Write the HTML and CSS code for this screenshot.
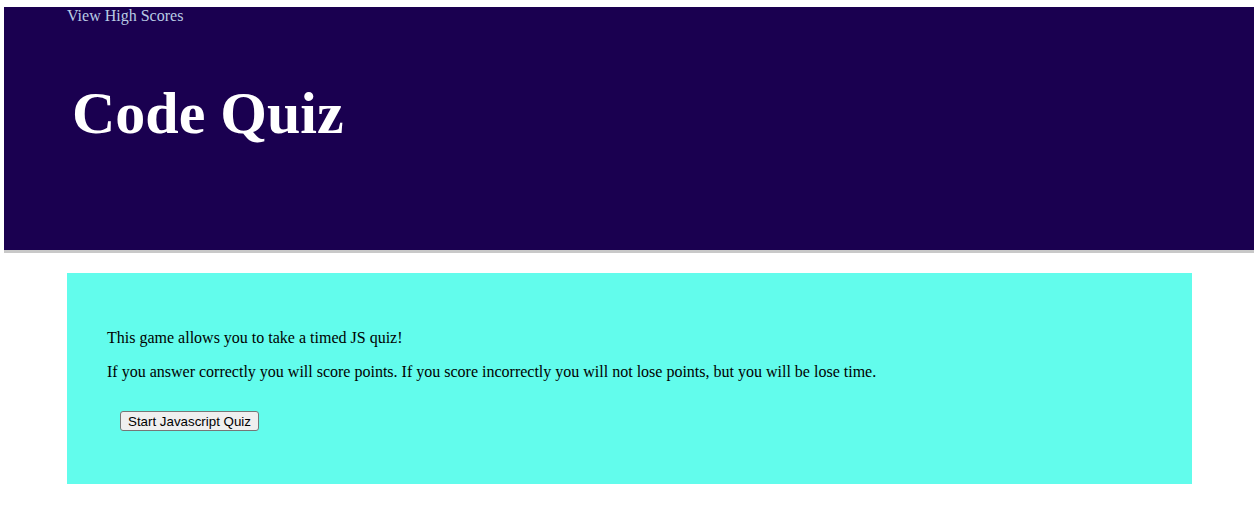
FILE: index.html
```html
<!DOCTYPE html>
<html>
<head>
<meta charset="utf-8">
<title>Code Quiz</title>
<link rel="stylesheet" href="styles.css">
</head>
<body>
<header class="top">
  <a class="scores-link" href="#">View High Scores</a>
  <h1 class="title">Code Quiz</h1>
</header>
<main class="intro">
  <p class="intro-text">This game allows you to take a timed JS quiz!</p>
  <p class="intro-text">If you answer correctly you will score points. If you score incorrectly you will not lose points, but you will be lose time.</p>
  <div class="actions">
    <button class="start-btn" type="button">Start Javascript Quiz</button>
  </div>
</main>
</body>
</html>
```
FILE: styles.css
```css
html, body {
  margin: 0;
  padding: 0;
  background: #ffffff;
}

body {
  font-family: "Liberation Serif", "Times New Roman", serif;
  font-size: 16px;
  color: #000;
}

.top {
  margin: 7px 4px 0;
  height: 243px;
  background: #1a0050;
  border-bottom: 3px solid #c8c8c8;
  padding: 0 0 0 63px;
  box-sizing: content-box;
}

.scores-link {
  display: block;
  color: #b8cbe4;
  text-decoration: none;
  font-size: 16px;
  line-height: 18px;
}

.title {
  margin: 54px 0 0 5px;
  font-size: 60px;
  font-weight: bold;
  color: #ffffff;
  line-height: 69px;
}

.intro {
  margin: 20px 66px 0 67px;
  background: #62fcec;
  padding: 40px 40px 53px;
}

.intro-text {
  margin: 16px 0;
  line-height: 18px;
}

.actions {
  margin: 30px 0 0 13px;
  display: flex;
}

.start-btn {
  font-family: "Liberation Sans", Arial, sans-serif;
  font-size: 13.333px;
  height: 20px;
  padding: 0 7px;
  background: #efefef;
  border: 1px solid #767676;
  border-radius: 3px;
  color: #000;
}
```
